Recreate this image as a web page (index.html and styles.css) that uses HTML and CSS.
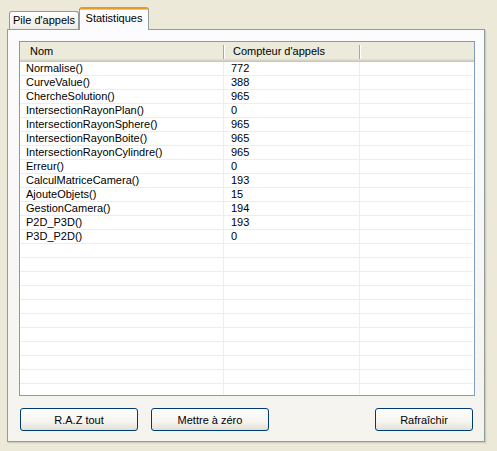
FILE: index.html
```html
<!DOCTYPE html>
<html>
<head>
<meta charset="utf-8">
<link rel="stylesheet" href="styles.css">
</head>
<body>
<div class="window">
  <div class="tabs">
    <div class="tab">Pile d'appels</div>
    <div class="tab active">Statistiques</div>
  </div>
  <div class="panel">
    <div class="list">
      <div class="header">
        <div class="hcell c1">Nom</div>
        <div class="hcell c2">Compteur d'appels</div>
        <div class="hcell c3"></div>
      </div>
      <div class="rows">
        <div class="row"><div class="cell c1">Normalise()</div><div class="cell c2">772</div><div class="cell c3"></div></div>
        <div class="row"><div class="cell c1">CurveValue()</div><div class="cell c2">388</div><div class="cell c3"></div></div>
        <div class="row"><div class="cell c1">ChercheSolution()</div><div class="cell c2">965</div><div class="cell c3"></div></div>
        <div class="row"><div class="cell c1">IntersectionRayonPlan()</div><div class="cell c2">0</div><div class="cell c3"></div></div>
        <div class="row"><div class="cell c1">IntersectionRayonSphere()</div><div class="cell c2">965</div><div class="cell c3"></div></div>
        <div class="row"><div class="cell c1">IntersectionRayonBoite()</div><div class="cell c2">965</div><div class="cell c3"></div></div>
        <div class="row"><div class="cell c1">IntersectionRayonCylindre()</div><div class="cell c2">965</div><div class="cell c3"></div></div>
        <div class="row"><div class="cell c1">Erreur()</div><div class="cell c2">0</div><div class="cell c3"></div></div>
        <div class="row"><div class="cell c1">CalculMatriceCamera()</div><div class="cell c2">193</div><div class="cell c3"></div></div>
        <div class="row"><div class="cell c1">AjouteObjets()</div><div class="cell c2">15</div><div class="cell c3"></div></div>
        <div class="row"><div class="cell c1">GestionCamera()</div><div class="cell c2">194</div><div class="cell c3"></div></div>
        <div class="row"><div class="cell c1">P2D_P3D()</div><div class="cell c2">193</div><div class="cell c3"></div></div>
        <div class="row"><div class="cell c1">P3D_P2D()</div><div class="cell c2">0</div><div class="cell c3"></div></div>
        <div class="row"><div class="cell c1"></div><div class="cell c2"></div><div class="cell c3"></div></div>
        <div class="row"><div class="cell c1"></div><div class="cell c2"></div><div class="cell c3"></div></div>
        <div class="row"><div class="cell c1"></div><div class="cell c2"></div><div class="cell c3"></div></div>
        <div class="row"><div class="cell c1"></div><div class="cell c2"></div><div class="cell c3"></div></div>
        <div class="row"><div class="cell c1"></div><div class="cell c2"></div><div class="cell c3"></div></div>
        <div class="row"><div class="cell c1"></div><div class="cell c2"></div><div class="cell c3"></div></div>
        <div class="row"><div class="cell c1"></div><div class="cell c2"></div><div class="cell c3"></div></div>
        <div class="row"><div class="cell c1"></div><div class="cell c2"></div><div class="cell c3"></div></div>
        <div class="row"><div class="cell c1"></div><div class="cell c2"></div><div class="cell c3"></div></div>
        <div class="row"><div class="cell c1"></div><div class="cell c2"></div><div class="cell c3"></div></div>
        <div class="row"><div class="cell c1"></div><div class="cell c2"></div><div class="cell c3"></div></div>
      </div>
    </div>
    <div class="buttons">
      <button class="btn w117">R.A.Z tout</button>
      <button class="btn w117">Mettre à zéro</button>
      <div class="spacer"></div>
      <button class="btn w98">Rafraîchir</button>
    </div>
  </div>
</div>
</body>
</html>
```
FILE: styles.css
```css
html, body {
  margin: 0;
  padding: 0;
  background: #ece9d8;
  width: 497px;
  height: 451px;
  overflow: hidden;
  font-family: "Liberation Sans", Arial, sans-serif;
  font-size: 11px;
  color: #000;
}
.window {
  padding-left: 7px;
}
.tabs {
  display: flex;
  align-items: flex-end;
  height: 29px;
  padding-left: 2px;
  position: relative;
  z-index: 2;
}
.tab {
  box-sizing: border-box;
  height: 18px;
  width: 70px;
  border: 1px solid #919b9c;
  border-bottom: none;
  border-radius: 3px 3px 0 0;
  background: linear-gradient(#ffffff, #f3f2ec 70%, #ecebe5);
  text-align: center;
  line-height: 17px;
}
.tab.active {
  height: 23px;
  margin-bottom: -1px;
  border-top: 2px solid #e69b2c;
  background: #fcfcfe;
  line-height: 18px;
  position: relative;
}
.tab.active::before {
  content: "";
  position: absolute;
  left: 0; right: 0; top: 0;
  height: 1px;
  background: #ffc73c;
}
.panel {
  box-sizing: border-box;
  width: 478px;
  height: 413px;
  border: 1px solid #919b9c;
  background: linear-gradient(#fcfcfe, #f4f3ee);
  box-shadow: 1px 1px 0 #d0cdc0, 2px 2px 0 #e3e0d0;
  padding: 11px 10px 0 11px;
}
.list {
  box-sizing: border-box;
  width: 456px;
  height: 355px;
  border: 1px solid #7f9db9;
  background: #fff;
  overflow: hidden;
}
.header {
  display: grid;
  grid-template-columns: 204px 136px 113px;
  height: 20px;
  background: #ebeadb;
  box-shadow: inset 0 -1px 0 #cbc7b8, inset 0 -2px 0 #d6d2c2, inset 0 -3px 0 #e2decd;
}
.hcell {
  line-height: 18px;
  position: relative;
}
.hcell.c1 { padding-left: 10px; }
.hcell.c2 { padding-left: 9px; }
.hcell.c1::after, .hcell.c2::after {
  content: "";
  position: absolute;
  right: 0;
  top: 3px;
  height: 14px;
  width: 1px;
  background: #aca899;
  box-shadow: 1px 0 0 #fff;
}
.row {
  display: grid;
  grid-template-columns: 204px 136px 113px;
  height: 14px;
}
.cell {
  box-sizing: border-box;
  height: 14px;
  line-height: 13px;
  border-bottom: 1px solid #f0eee2;
  white-space: nowrap;
  overflow: hidden;
}
.cell.c1 { padding-left: 6px; border-right: 1px solid #f0eee2; }
.cell.c2 { padding-left: 7px; border-right: 1px solid #f0eee2; }
.buttons {
  display: flex;
  margin-top: 12px;
  gap: 13px;
  margin-left: 1px;
}
.spacer { flex: 1; }
.btn {
  box-sizing: border-box;
  height: 23px;
  border: 1px solid #003c74;
  border-radius: 3px;
  background: linear-gradient(#ffffff, #f5f4ef 60%, #e3e0d5);
  font-family: "Liberation Sans", Arial, sans-serif;
  font-size: 11px;
  font-weight: normal;
  color: #000;
  padding: 0;
}
.w117 { width: 118px; }
.w98 { width: 98px; margin-right: 1px; }
```
